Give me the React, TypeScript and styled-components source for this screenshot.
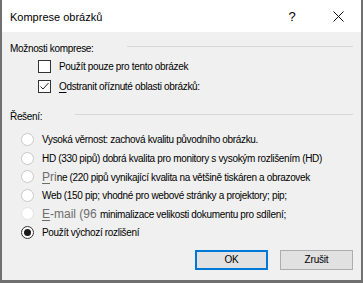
import React from "react";
import styled, { createGlobalStyle } from "styled-components";

const GlobalStyle = createGlobalStyle`
  html, body {
    margin: 0;
    padding: 0;
    background: #ffffff;
  }
  body {
    font-family: "Liberation Sans", Arial, sans-serif;
    font-size: 10px;
    letter-spacing: -0.33px;
    color: #000;
  }
`;

const Dialog = styled.div`
  width: 363px;
  height: 283px;
  box-sizing: border-box;
  border-left: 2px solid #707070;
  border-right: 2px solid #707070;
  border-bottom: 3px solid #707070;
  display: flex;
  flex-direction: column;
  background: #f0f0f0;
`;

const TitleBar = styled.div`
  height: 32px;
  background: #ffffff;
  display: flex;
  align-items: center;
  padding: 1px 0 0 8px;
  box-sizing: border-box;
`;

const Title = styled.div`
  flex: 1;
  font-size: 11px;
  letter-spacing: 0;
  color: #000;
`;

const TitleButton = styled.div<{ $w: number }>`
  width: ${(p) => p.$w}px;
  height: 32px;
  display: flex;
  align-items: center;
  justify-content: center;
  font-size: 13px;
  letter-spacing: 0;
`;

const Body = styled.div`
  flex: 1;
  padding: 9px 8px 0 8px;
  display: flex;
  flex-direction: column;
`;

const GroupHeader = styled.div<{ $top?: number }>`
  display: flex;
  align-items: center;
  gap: 33px;
  height: 14px;
  margin-top: ${(p) => p.$top ?? 0}px;
  color: #000;
`;

const Rule = styled.div`
  flex: 1;
  height: 1px;
  background: #d8d8d8;
  margin-top: -3px;
`;

const CheckList = styled.div`
  display: flex;
  flex-direction: column;
  gap: 7px;
  padding: 5px 0 0 28px;
`;

const OptionRow = styled.label`
  display: flex;
  align-items: center;
  gap: 8px;
  height: 13px;
  white-space: nowrap;
`;

const Box = styled.span`
  width: 13px;
  height: 13px;
  box-sizing: border-box;
  border: 1px solid #333333;
  background: #fff;
  display: flex;
  align-items: center;
  justify-content: center;
`;

const Accel = styled.span`
  text-decoration: underline;
  text-underline-offset: 2px;
`;

const RadioList = styled.div`
  display: flex;
  flex-direction: column;
  gap: 5.6px;
  padding: 10px 0 0 11px;
`;

const RadioRow = styled.div`
  display: flex;
  align-items: center;
  gap: 8px;
  height: 13px;
  white-space: nowrap;
`;

const Circle = styled.span<{ $checked?: boolean; $disabled?: boolean }>`
  width: 13px;
  height: 13px;
  box-sizing: border-box;
  border-radius: 50%;
  border: 1px solid
    ${(p) => (p.$checked ? "#333333" : p.$disabled ? "#e2e2e2" : "#c8c8c8")};
  background: #ffffff;
  display: flex;
  align-items: center;
  justify-content: center;
  flex-shrink: 0;
`;

const Dot = styled.span`
  width: 7px;
  height: 7px;
  border-radius: 50%;
  background: #1a1a1a;
`;

const Glitch = styled.span`
  font-size: 12px;
  letter-spacing: 0;
  color: #6d6d6d;
`;

const Footer = styled.div`
  display: flex;
  justify-content: flex-end;
  gap: 12px;
  padding: 11px 0 0 0;
`;

const Button = styled.button<{ $primary?: boolean }>`
  width: 73px;
  height: 20px;
  box-sizing: border-box;
  font-family: "Liberation Sans", Arial, sans-serif;
  font-size: 10px;
  letter-spacing: -0.2px;
  color: #000;
  background: #e1e1e1;
  border: ${(p) => (p.$primary ? "2px solid #0078d7" : "1px solid #adadad")};
  padding: 0;
`;

const Check = () => (
  <svg width="11" height="11" viewBox="0 0 11 11">
    <path d="M1.5 5.5 L4 8 L9.5 2" fill="none" stroke="#222" strokeWidth="1" />
  </svg>
);

export default function App() {
  return (
    <>
      <GlobalStyle />
      <Dialog>
        <TitleBar>
          <Title>Komprese obrázků</Title>
          <TitleButton $w={46}>?</TitleButton>
          <TitleButton $w={46}>
            <svg width="11" height="11" viewBox="0 0 11 11">
              <path d="M0.5 0.5 L10.5 10.5 M10.5 0.5 L0.5 10.5" stroke="#111" strokeWidth="1" />
            </svg>
          </TitleButton>
        </TitleBar>
        <Body>
          <GroupHeader>
            Možnosti komprese:
            <Rule />
          </GroupHeader>
          <CheckList>
            <OptionRow>
              <Box />
              Použít pouze pro tento obrázek
            </OptionRow>
            <OptionRow>
              <Box>
                <Check />
              </Box>
              <span>
                <Accel>O</Accel>dstranit oříznuté oblasti obrázků:
              </span>
            </OptionRow>
          </CheckList>
          <GroupHeader $top={16}>
            Řešení:
            <Rule />
          </GroupHeader>
          <RadioList>
            <RadioRow>
              <Circle />
              Vysoká věrnost: zachová kvalitu původního obrázku.
            </RadioRow>
            <RadioRow>
              <Circle />
              HD (330 pipů) dobrá kvalita pro monitory s vysokým rozlišením (HD)
            </RadioRow>
            <RadioRow>
              <Circle />
              <span>
                <Glitch>
                  <Accel>P</Accel>ri
                </Glitch>
                ne (220 pipů vynikající kvalita na většině tiskáren a obrazovek
              </span>
            </RadioRow>
            <RadioRow>
              <Circle />
              Web (150 pip; vhodné pro webové stránky a projektory; pip;
            </RadioRow>
            <RadioRow>
              <Circle $disabled />
              <span>
                <Glitch>
                  <Accel>E</Accel>-mail (96{" "}
                </Glitch>
                minimalizace velikosti dokumentu pro sdílení;
              </span>
            </RadioRow>
            <RadioRow>
              <Circle $checked>
                <Dot />
              </Circle>
              Použít výchozí rozlišení
            </RadioRow>
          </RadioList>
          <Footer>
            <Button $primary>OK</Button>
            <Button>Zrušit</Button>
          </Footer>
        </Body>
      </Dialog>
    </>
  );
}
